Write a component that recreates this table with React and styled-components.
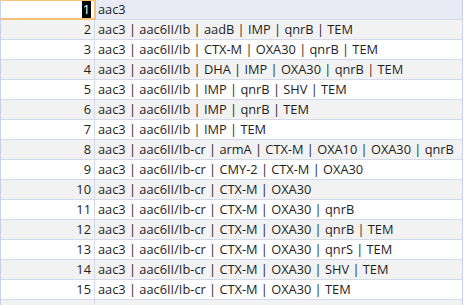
import styled, { createGlobalStyle } from 'styled-components';

const GlobalStyle = createGlobalStyle`
  body {
    margin: 0;
    background: #fff;
    font-family: 'Open Sans', 'Noto Sans', sans-serif;
  }
`;

const rows = [
  'aac3',
  'aac3 | aac6II/Ib | aadB | IMP | qnrB | TEM',
  'aac3 | aac6II/Ib | CTX-M | OXA30 | qnrB | TEM',
  'aac3 | aac6II/Ib | DHA | IMP | OXA30 | qnrB | TEM',
  'aac3 | aac6II/Ib | IMP | qnrB | SHV | TEM',
  'aac3 | aac6II/Ib | IMP | qnrB | TEM',
  'aac3 | aac6II/Ib | IMP | TEM',
  'aac3 | aac6II/Ib-cr | armA | CTX-M | OXA10 | OXA30 | qnrB',
  'aac3 | aac6II/Ib-cr | CMY-2 | CTX-M | OXA30',
  'aac3 | aac6II/Ib-cr | CTX-M | OXA30',
  'aac3 | aac6II/Ib-cr | CTX-M | OXA30 | qnrB',
  'aac3 | aac6II/Ib-cr | CTX-M | OXA30 | qnrB | TEM',
  'aac3 | aac6II/Ib-cr | CTX-M | OXA30 | qnrS | TEM',
  'aac3 | aac6II/Ib-cr | CTX-M | OXA30 | SHV | TEM',
  'aac3 | aac6II/Ib-cr | CTX-M | OXA30 | TEM',
  '',
];

// 데이터시트 전체
const Sheet = styled.div`
  width: 463px;
  height: 305px;
  overflow: hidden;
  border-right: 1px solid #c6d0e6;
  border-left: 1px solid #c6d0e6;
  box-sizing: border-box;
`;

const Row = styled.div`
  display: flex;
  height: 20px;
  box-sizing: border-box;
  border-bottom: 1px solid #d3dbeb;
  background: ${(p) => (p.$current ? '#e8ebf5' : p.$alt ? '#f2f2f2' : '#fff')};
  font-size: 12.8px;
  color: #1e1e1e;
  line-height: 19px;
`;

// 행 번호 칸 (현재 행은 주황 테두리)
const NumCell = styled.div`
  width: 95px;
  margin-left: -1px;
  flex-shrink: 0;
  box-sizing: border-box;
  padding-right: 3px;
  text-align: right;
  border-right: 1px solid #d3dbeb;
  background: ${(p) => (p.$current ? '#fff' : 'inherit')};
  outline: ${(p) => (p.$current ? '2px solid #f8c274' : 'none')};
  outline-offset: -1px;
`;

const Caret = styled.span`
  background: #000;
  color: #fff;
  padding: 0 1px;
`;

const ValueCell = styled.div`
  flex: 1;
  padding-left: 3px;
  white-space: nowrap;
  overflow: hidden;
`;

const App = () => {
  return (
    <>
      <GlobalStyle />
      <Sheet>
        {rows.map((text, i) => (
          <Row key={i} $current={i === 0} $alt={i % 2 === 1}>
            <NumCell $current={i === 0}>
              {i === 0 ? <Caret>1</Caret> : i < 15 ? i + 1 : ''}
            </NumCell>
            <ValueCell>{text}</ValueCell>
          </Row>
        ))}
      </Sheet>
    </>
  );
};

export default App;
